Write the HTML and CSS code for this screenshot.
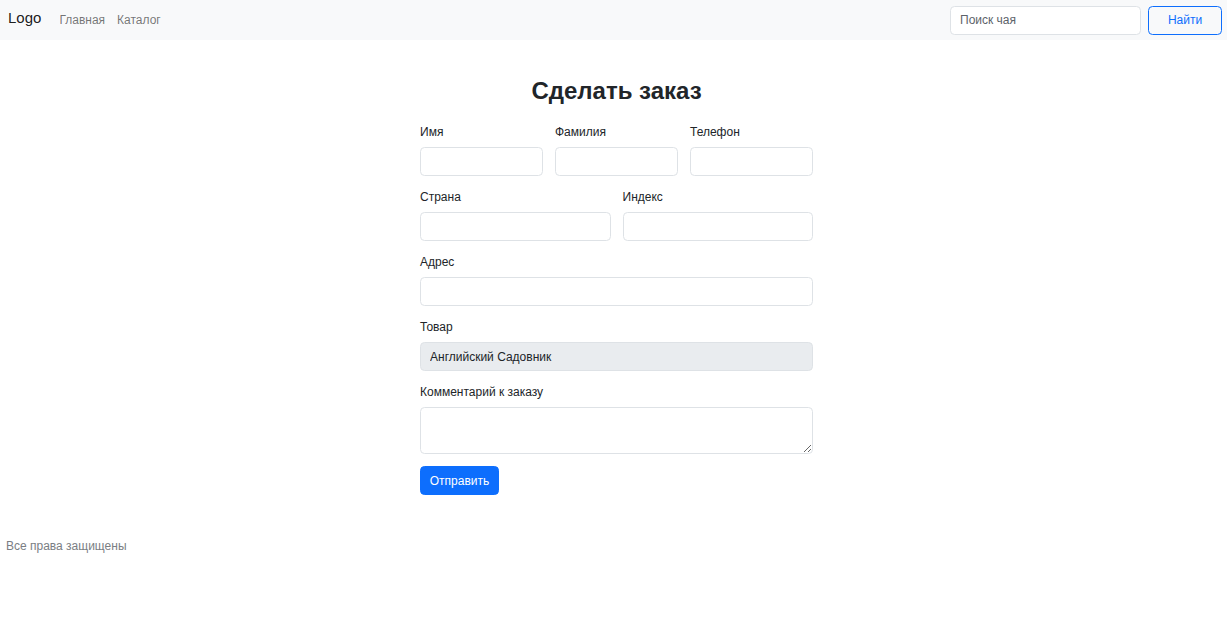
FILE: index.html
```html
<!DOCTYPE html>
<html lang="ru">
<head>
<meta charset="utf-8">
<title>Сделать заказ</title>
<link rel="stylesheet" href="styles.css">
</head>
<body>
<nav class="navbar">
  <div class="nav-left">
    <a class="brand" href="#">Logo</a>
    <a class="nav-link" href="#">Главная</a>
    <a class="nav-link" href="#">Каталог</a>
  </div>
  <form class="search">
    <input class="search-input" type="search" placeholder="Поиск чая">
    <button class="btn-outline" type="button">Найти</button>
  </form>
</nav>
<div class="page">
<main class="main">
  <h2 class="title">Сделать заказ</h2>
  <form class="order">
    <div class="row row-3">
      <div class="field"><label class="label">Имя</label><input class="control" type="text"></div>
      <div class="field"><label class="label">Фамилия</label><input class="control" type="text"></div>
      <div class="field"><label class="label">Телефон</label><input class="control" type="text"></div>
    </div>
    <div class="row row-2">
      <div class="field"><label class="label">Страна</label><input class="control" type="text"></div>
      <div class="field"><label class="label">Индекс</label><input class="control" type="text"></div>
    </div>
    <div class="field"><label class="label">Адрес</label><input class="control" type="text"></div>
    <div class="field"><label class="label">Товар</label><input class="control readonly" type="text" value="Английский Садовник" readonly></div>
    <div class="field"><label class="label">Комментарий к заказу</label><textarea class="control textarea" rows="2"></textarea></div>
    <button class="btn-primary" type="button">Отправить</button>
  </form>
</main>
</div>
<footer class="footer">Все права защищены</footer>
</body>
</html>
```
FILE: styles.css
```css
* { box-sizing: border-box; }
html, body { margin: 0; padding: 0; }
body {
  font-family: "Liberation Sans", Arial, sans-serif;
  font-size: 12px;
  line-height: 1.5;
  color: #212529;
  background: #fff;
}
.navbar {
  height: 40px;
  background: #f8f9fa;
  display: flex;
  align-items: center;
  justify-content: space-between;
  padding: 0 5px 0 8px;
}
.nav-left { display: flex; align-items: center; }
.brand {
  font-size: 15px;
  color: rgba(0,0,0,.9);
  text-decoration: none;
  margin-right: 12px;
  margin-top: -4px;
}
.nav-link {
  font-size: 12px;
  color: rgba(0,0,0,.55);
  text-decoration: none;
  padding: 0 6px;
}
.search { display: flex; align-items: center; gap: 7px; margin: 0; }
.search-input {
  width: 191px;
  height: 29px;
  border: 1px solid #dee2e6;
  border-radius: 4.5px;
  padding: 4px 9px;
  font: inherit;
  font-size: 12px;
  color: #212529;
  background: #fff;
}
.search-input::placeholder { color: #5c636a; }
.btn-outline {
  width: 74px;
  height: 29px;
  border: 1px solid #0d6efd;
  border-radius: 4.5px;
  background: transparent;
  color: #0d6efd;
  font: inherit;
  font-size: 12px;
}
.page { padding-left: 6px; }
.main {
  width: 393px;
  margin: 0 auto;
  padding-top: 36px;
}
.title {
  margin: 0 0 18px;
  text-align: center;
  font-size: 24px;
  line-height: 29px;
  font-weight: 700;
}
.order { display: flex; flex-direction: column; }
.row { display: grid; gap: 12px; }
.row-3 { grid-template-columns: 1fr 1fr 1fr; }
.row-2 { grid-template-columns: 1fr 1fr; }
.field { display: flex; flex-direction: column; margin-bottom: 12px; min-width: 0; }
.label { line-height: 18px; margin-bottom: 6px; }
.control {
  width: 100%;
  height: 29px;
  border: 1px solid #dee2e6;
  border-radius: 4.5px;
  padding: 4px 9px;
  font: inherit;
  font-size: 12px;
  color: #212529;
  background: #fff;
}
.readonly { background: #e9ecef; }
.textarea { height: 47px; resize: vertical; line-height: 18px; }
.btn-primary {
  align-self: flex-start;
  height: 29px;
  width: 79px;
  padding: 0;
  border: 1px solid #0d6efd;
  border-radius: 4.5px;
  background: #0d6efd;
  color: #fff;
  font: inherit;
  font-size: 12px;
}
.footer {
  margin-top: 42px;
  padding-left: 6px;
  color: #7a7e83;
  font-size: 12px;
  line-height: 18px;
}
```
